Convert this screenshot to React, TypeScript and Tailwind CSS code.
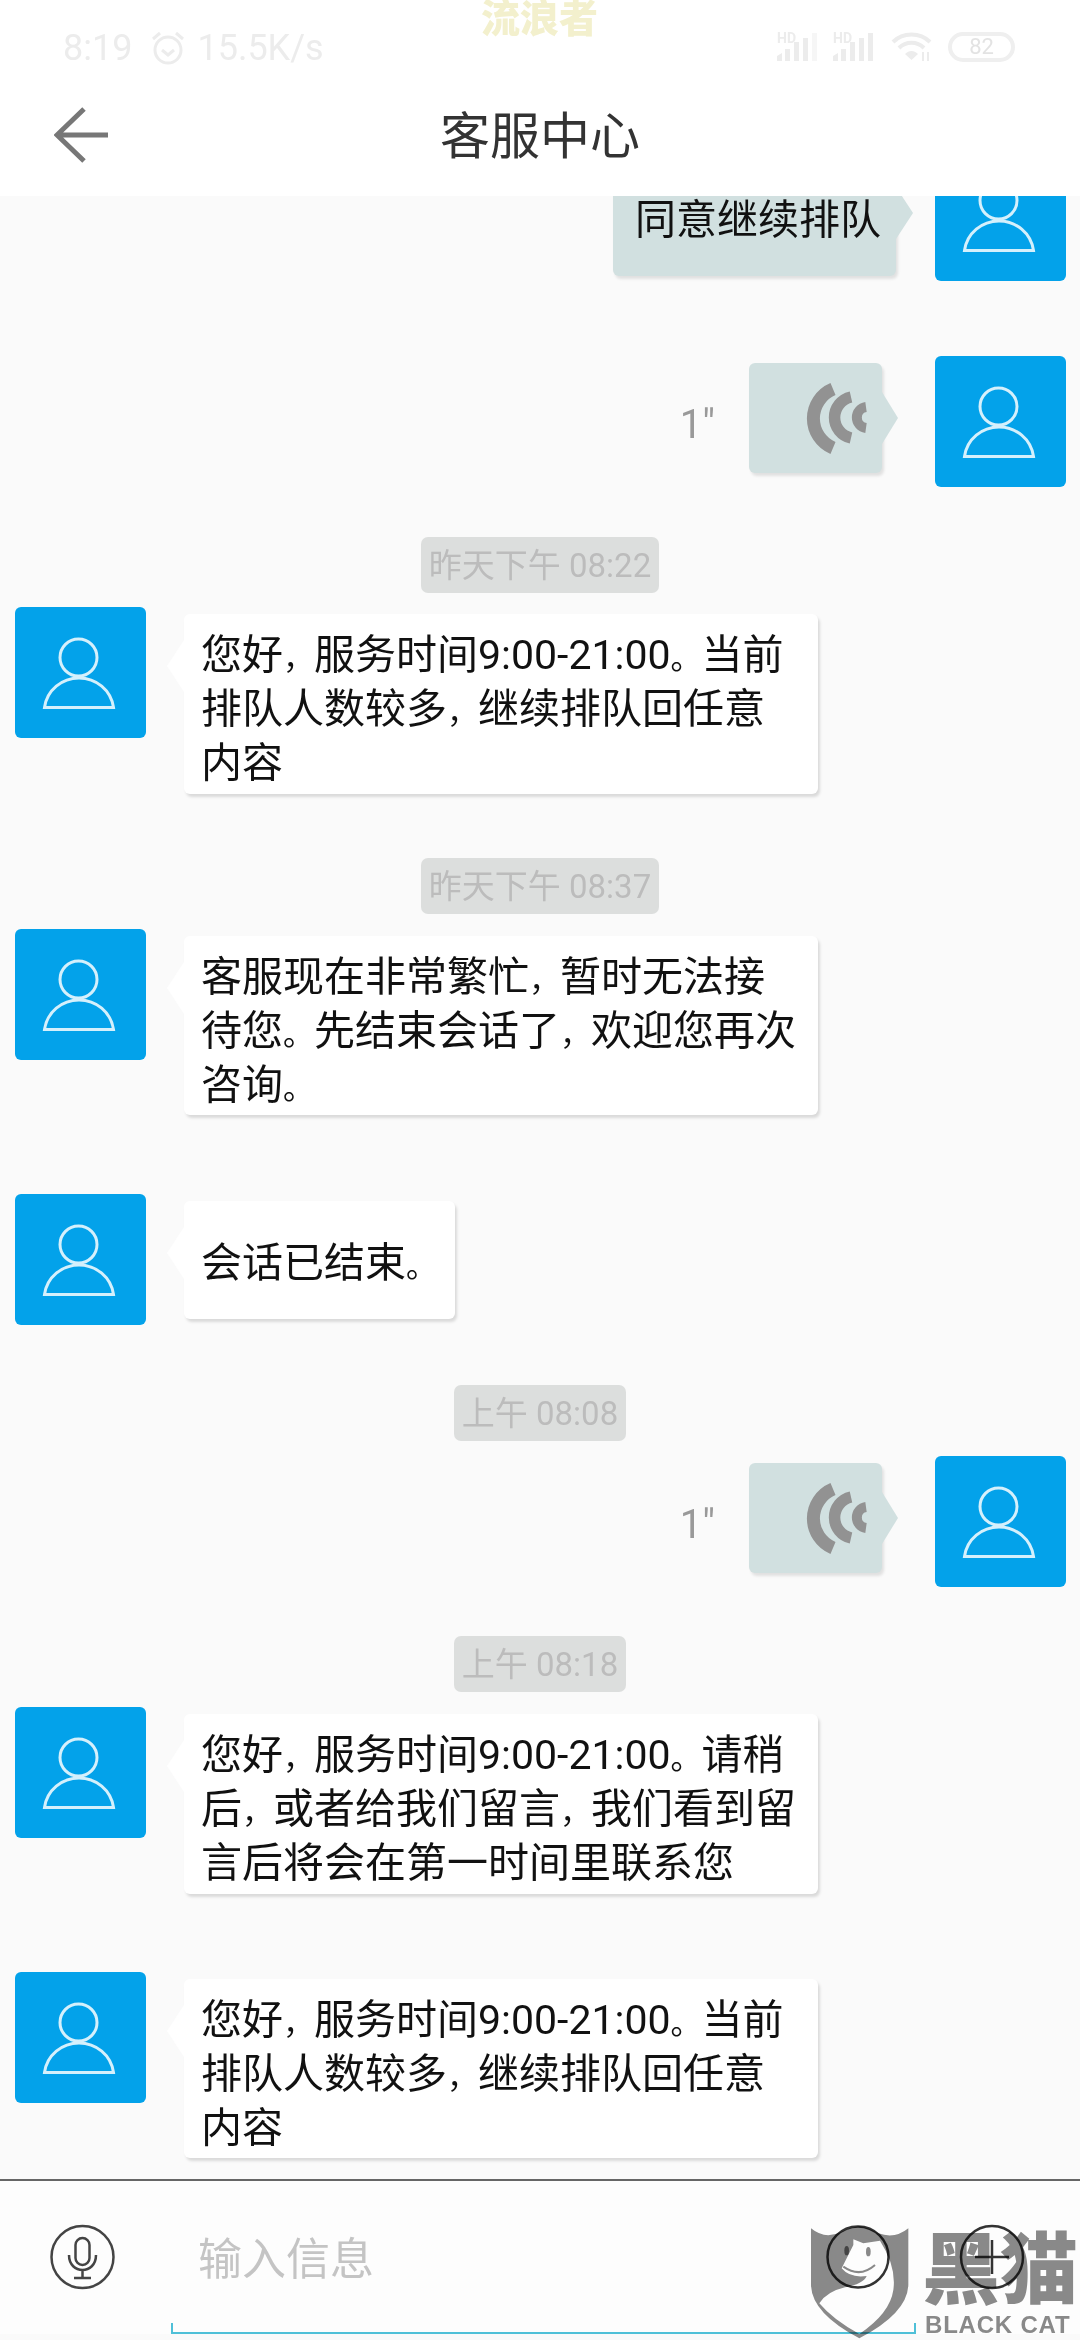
import type { ReactNode } from 'react'

const Avatar = () => (
  <div className="h-[131px] w-[131px] shrink-0 rounded-[6px] bg-[#03a2ea]">
    <svg viewBox="0 0 131 131" className="h-full w-full" fill="none" stroke="#d5f0fc" strokeWidth="3">
      <circle cx="63.5" cy="50.5" r="18.5" />
      <path d="M29.5 100.5C32 83 47 71 64 71C81 71 96 83 98.5 100.5Z" />
    </svg>
  </div>
)

const Stamp = ({ children, className }: { children: ReactNode; className: string }) => (
  <div className={`flex justify-center ${className}`}>
    <div className="flex h-[56px] items-center rounded-[7px] bg-[#dcdedd] px-[8px] pt-[2px] text-[33px] text-[#bcbcbc]">
      {children}
    </div>
  </div>
)

// the punctuation in the screenshot is narrower than the font's full width
const Line = ({ text }: { text: string }) => (
  <div className="h-[54px]">
    {text.split(/([，。])/).map((part, i) =>
      part === '，' || part === '。' ? (
        <span key={i} className="text-[31px] leading-none">
          {part}
        </span>
      ) : (
        <span key={i}>{part}</span>
      ),
    )}
  </div>
)

const Incoming = ({ lines, width, height, className, textClass }: { lines: string[]; width: string; height: string; className: string; textClass: string }) => (
  <div className={`flex items-start pl-[15px] ${className}`}>
    <Avatar />
    <div className={`relative ml-[38px] mt-[7px] rounded-[6px] bg-white pl-[17px] text-[41px] leading-[54px] whitespace-nowrap text-[#111] shadow-[2px_3px_3px_rgba(0,0,0,0.13)] ${width} ${height} ${textClass}`}>
      <div className="absolute left-[-17px] top-[26px] h-0 w-0 border-y-[26px] border-r-[17px] border-y-transparent border-r-white" />
      {lines.map((l) => (
        <Line key={l} text={l} />
      ))}
    </div>
  </div>
)

const VoiceOut = ({ className }: { className: string }) => (
  <div className={`flex items-start justify-end pr-[14px] ${className}`}>
    <div className="mr-[34px] mt-[47px] text-[40px] leading-[44px] text-[#999]">1"</div>
    <div className="relative mr-[53px] mt-[7px] flex h-[110px] w-[133px] items-center justify-end rounded-[6px] bg-[#d1e0e0] pr-[6px] shadow-[2px_3px_3px_rgba(0,0,0,0.1)]">
      <div className="absolute right-[-16px] top-[29px] h-0 w-0 border-y-[26px] border-l-[16px] border-y-transparent border-l-[#d1e0e0]" />
      <svg viewBox="800 380 75 76" className="h-[76px] w-[75px] blur-[0.5px]" fill="none" stroke="#929292">
        <path d="M832 389A32 32 0 0 0 832 448" strokeWidth="13" />
        <path d="M850 397A21 21 0 0 0 850 438" strokeWidth="11.5" />
        <path d="M865 407A10.6 10.6 0 0 0 865 428" strokeWidth="10" />
      </svg>
    </div>
    <Avatar />
  </div>
)

const Signal = ({ last }: { last: string }) => (
  <svg viewBox="0 -4 44 34" className="h-[34px] w-[44px]" fill="#ececec">
    <path d="M1 29V24L6 21V29ZM9 29V17H14V29ZM18 29V10H23V29ZM27 29V6H32V29Z" />
    <path d="M36 29V1H41V29Z" fill={last} />
    <text x="1" y="11" fontSize="14" fontWeight="700" fontFamily="Roboto, sans-serif">HD</text>
  </svg>
)

const queueNotice = ['您好，服务时间9:00-21:00。当前', '排队人数较多，继续排队回任意', '内容']

export default function App() {
  return (
    <div className="relative flex h-[2340px] w-[1080px] flex-col overflow-hidden bg-[#fafafa] font-['Roboto','Noto_Sans_CJK_SC',sans-serif]">
      <div className="relative flex h-[72px] shrink-0 items-center bg-white pt-[24px] text-[36px] leading-[40px] text-[#ececec]">
        <span className="ml-[63px]">8:19</span>
        <svg viewBox="0 0 36 34" className="ml-[18px] h-[34px] w-[36px]" fill="none" stroke="#ececec" strokeWidth="3">
          <circle cx="18" cy="19" r="13" />
          <path d="M12 19L18 24L24 19M3 8L10 2M33 8L26 2" />
        </svg>
        <span className="ml-[11px]">15.5K/s</span>
        <div className="absolute left-[776px] top-[28px] flex items-end">
          <Signal last="#f6f6f6" />
          <div className="ml-[12px] flex">
            <Signal last="#ececec" />
          </div>
          <svg viewBox="0 0 42 31" className="ml-[15px] h-[31px] w-[42px]" fill="none" stroke="#ececec" strokeWidth="4">
            <path d="M2 11C12 1 29 1 39 11M8 17C15 10 26 10 33 17" />
            <path d="M14 23C18 19 23 19 27 23L20.500 29Z" fill="#ececec" stroke="none" />
            <path d="M32 30V21M37 30V21" strokeWidth="2" />
          </svg>
          <div className="ml-[15px] flex h-[30px] w-[67px] items-center justify-center rounded-full border-[4px] border-[#efefef] text-[22px] leading-none text-[#e3e3e3]">
            82
          </div>
        </div>
        <div className="absolute left-[481px] top-0 text-[39px] font-black leading-[38px] text-[#f3f0cd]">流浪者</div>
      </div>

      <div className="relative flex h-[124px] shrink-0 items-center justify-center bg-white pt-[6px] text-[50px] text-[#333]">
        <svg viewBox="0 0 56 56" className="absolute left-[54px] top-[35px] h-[56px] w-[56px]" fill="none" stroke="#777" strokeWidth="5">
          <path d="M30 2L3 28L30 54M3 28H54" />
        </svg>
        客服中心
      </div>

      <div className="h-[1983px] shrink-0 overflow-hidden">
        <div className="mt-[-46px] flex items-start justify-end pr-[14px]">
          <div className="relative mr-[39px] mt-[-10px] h-[136px] w-[283px] rounded-[6px] bg-[#d1e0e0] pl-[22px] pt-[53px] text-[41px] leading-[55px] whitespace-nowrap text-[#111] shadow-[2px_3px_3px_rgba(0,0,0,0.1)]">
            <div className="absolute right-[-17px] top-[47px] h-0 w-0 border-y-[26px] border-l-[17px] border-y-transparent border-l-[#d1e0e0]" />
            同意继续排队
          </div>
          <Avatar />
        </div>
        <VoiceOut className="mt-[75px]" />
        <Stamp className="mt-[50px]">昨天下午 08:22</Stamp>
        <Incoming className="mt-[14px]" width="w-[634px]" height="h-[180px]" textClass="pt-[14px]" lines={queueNotice} />
        <Stamp className="mt-[64px]">昨天下午 08:37</Stamp>
        <Incoming
          className="mt-[15px]"
          width="w-[634px]"
          height="h-[179px]"
          textClass="pt-[14px]"
          lines={['客服现在非常繁忙，暂时无法接', '待您。先结束会话了，欢迎您再次', '咨询。']}
        />
        <Incoming className="mt-[79px]" width="w-[271px]" height="h-[118px]" textClass="pt-[35px]" lines={['会话已结束。']} />
        <Stamp className="mt-[60px]">上午 08:08</Stamp>
        <VoiceOut className="mt-[15px]" />
        <Stamp className="mt-[49px]">上午 08:18</Stamp>
        <Incoming
          className="mt-[15px]"
          width="w-[634px]"
          height="h-[180px]"
          textClass="pt-[14px]"
          lines={['您好，服务时间9:00-21:00。请稍', '后，或者给我们留言，我们看到留', '言后将会在第一时间里联系您']}
        />
        <Incoming className="mt-[78px]" width="w-[634px]" height="h-[179px]" textClass="pt-[14px]" lines={queueNotice} />
      </div>

      <div className="relative flex h-[155px] shrink-0 items-start border-t-2 border-[#666] bg-[#fdfdfd] pl-[50px] pt-[43px]">
        <svg viewBox="0 0 65 66" className="h-[66px] w-[65px]" fill="none" stroke="#444" strokeWidth="2.500">
          <circle cx="32.500" cy="33" r="31" />
          <rect x="25.500" y="14" width="14" height="27" rx="7" />
          <path d="M19 31C19 51 46 51 46 31M32.500 46V54M24 54H41" />
        </svg>
        <div className="ml-[83px] mt-[9px] text-[44px] leading-[54px] text-[#c4c4c4]">输入信息</div>
        <svg viewBox="0 0 65 66" className="absolute left-[826px] top-[43px] h-[66px] w-[65px]" fill="none" stroke="#333" strokeWidth="2.500">
          <circle cx="32" cy="33" r="30.500" />
        </svg>
        <svg viewBox="0 0 66 66" className="absolute left-[959px] top-[43px] h-[66px] w-[66px]" fill="none" stroke="#333" strokeWidth="2.500">
          <circle cx="33" cy="33" r="31" />
          <path d="M16 33H50M33 16V50" />
        </svg>
        <div className="absolute bottom-0 left-[171px] h-[11px] w-[745px] border-x-2 border-b-2 border-[#4fc0d8]" />
      </div>
      <div className="h-[6px] shrink-0 bg-[#fafafa]" />

      <div className="absolute bottom-0 right-0 h-[130px] w-[280px] mix-blend-multiply">
        <svg viewBox="0 0 840 390" className="absolute inset-0 h-full w-full">
          <path d="M33 55Q75 90 125 65Q150 52 178 48Q205 52 235 70Q285 88 325 55L325 225Q322 310 178 385Q35 310 33 225Z" fill="#8a8a8a" />
          <path d="M160 88L190 100Q215 95 240 92Q290 170 280 240Q270 310 178 372Q100 330 58 280Q80 245 135 232Q190 222 200 198Q150 205 125 175L160 105Z" fill="#fff" />
          <path d="M130 170Q180 205 225 165" fill="none" stroke="#8a8a8a" strokeWidth="6" />
          <ellipse cx="205" cy="125" rx="7" ry="14" fill="#8a8a8a" />
          <ellipse cx="140" cy="122" rx="7" ry="14" fill="#444" />
        </svg>
        <div className="absolute left-[122px] top-[22px] text-[78px] font-black leading-[80px] text-[#8a8a8a]">黑猫</div>
        <div className="absolute left-[125px] top-[103px] font-['Liberation_Sans',sans-serif] text-[24px] font-bold leading-[24px] tracking-[0.8px] text-[#8a8a8a]">BLACK CAT</div>
      </div>
    </div>
  )
}
